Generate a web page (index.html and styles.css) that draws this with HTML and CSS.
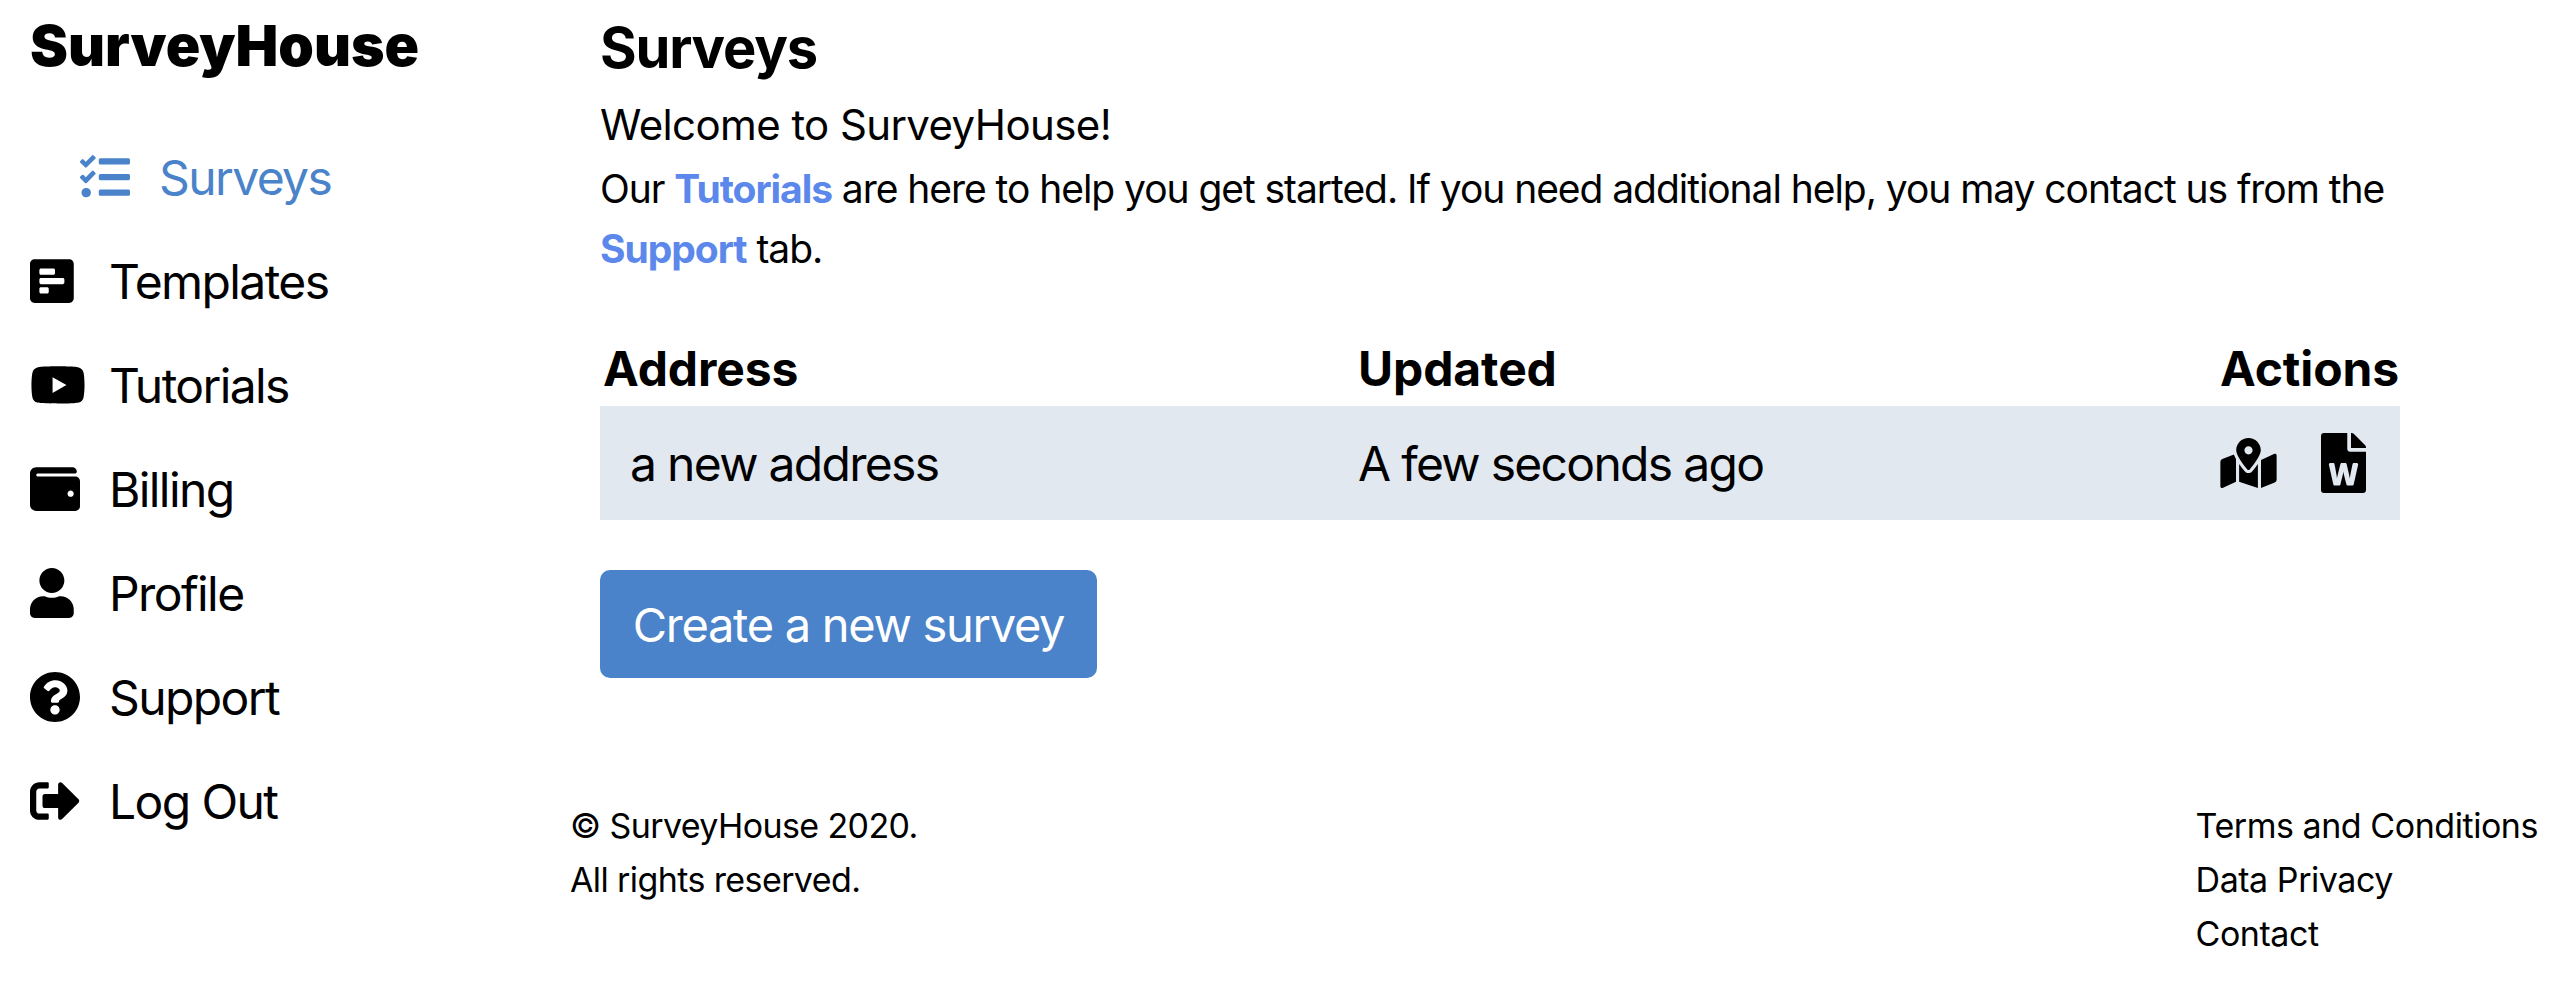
FILE: index.html
```html
<!DOCTYPE html>
<html lang="en">
<head>
<meta charset="utf-8">
<title>SurveyHouse</title>
<link rel="stylesheet" href="styles.css">
</head>
<body>
<div class="app">
  <aside class="sidebar">
    <div class="logo">SurveyHouse</div>
    <nav class="nav">
      <a class="nav-item active"><span class="nav-icon"><svg class="icon" viewBox="0 0 512 512"><path d="M139.61 35.5a12 12 0 0 0-17 0L58.93 98.81l-22.7-22.12a12 12 0 0 0-17 0L3.53 92.41a12 12 0 0 0 0 17l47.59 47.4a12.78 12.78 0 0 0 17.61 0l15.59-15.62L156.52 69a12.09 12.09 0 0 0 .09-17zm0 159.19a12 12 0 0 0-17 0l-63.68 63.72-22.7-22.1a12 12 0 0 0-17 0L3.53 252a12 12 0 0 0 0 17L51 316.5a12.77 12.77 0 0 0 17.6 0l15.7-15.69 72.2-72.22a12 12 0 0 0 .09-16.9zM64 368c-26.49 0-48.59 21.5-48.59 48S37.53 464 64 464a48 48 0 0 0 0-96zm432 16H208a16 16 0 0 0-16 16v32a16 16 0 0 0 16 16h288a16 16 0 0 0 16-16v-32a16 16 0 0 0-16-16zm0-320H208a16 16 0 0 0-16 16v32a16 16 0 0 0 16 16h288a16 16 0 0 0 16-16V80a16 16 0 0 0-16-16zm0 160H208a16 16 0 0 0-16 16v32a16 16 0 0 0 16 16h288a16 16 0 0 0 16-16v-32a16 16 0 0 0-16-16z"/></svg></span>Surveys</a>
      <a class="nav-item"><span class="nav-icon"><svg class="icon" viewBox="0 0 512 512"><path d="M448 432V80c0-26.5-21.5-48-48-48H48C21.5 32 0 53.5 0 80v352c0 26.5 21.5 48 48 48h352c26.5 0 48-21.5 48-48zM112 192c-8.84 0-16-7.16-16-16v-32c0-8.84 7.16-16 16-16h128c8.84 0 16 7.16 16 16v32c0 8.84-7.16 16-16 16H112zm0 96c-8.84 0-16-7.16-16-16v-32c0-8.84 7.16-16 16-16h224c8.84 0 16 7.16 16 16v32c0 8.84-7.16 16-16 16H112zm0 96c-8.84 0-16-7.16-16-16v-32c0-8.84 7.16-16 16-16h64c8.84 0 16 7.16 16 16v32c0 8.84-7.16 16-16 16h-64z"/></svg></span>Templates</a>
      <a class="nav-item"><span class="nav-icon"><svg class="icon icon-wide" viewBox="0 0 576 512"><path d="M549.655 124.083c-6.281-23.65-24.787-42.276-48.284-48.597C458.781 64 288 64 288 64S117.22 64 74.629 75.486c-23.497 6.322-42.003 24.947-48.284 48.597-11.412 42.867-11.412 132.305-11.412 132.305s0 89.438 11.412 132.305c6.281 23.65 24.787 41.5 48.284 47.821C117.22 448 288 448 288 448s170.78 0 213.371-11.486c23.497-6.321 42.003-24.171 48.284-47.821 11.412-42.867 11.412-132.305 11.412-132.305s0-89.438-11.412-132.305zm-317.51 213.508V175.185l142.739 81.205-142.739 81.201z"/></svg></span>Tutorials</a>
      <a class="nav-item"><span class="nav-icon"><svg class="icon" viewBox="0 0 512 512"><path d="M461.2 128H80c-8.84 0-16-7.16-16-16s7.16-16 16-16h384c8.84 0 16-7.16 16-16 0-26.51-21.49-48-48-48H64C28.65 32 0 60.65 0 96v320c0 35.35 28.65 64 64 64h397.2c28.02 0 50.8-21.53 50.8-48V176c0-26.47-22.78-48-50.8-48zM416 336c-17.67 0-32-14.33-32-32s14.33-32 32-32 32 14.33 32 32-14.33 32-32 32z"/></svg></span>Billing</a>
      <a class="nav-item"><span class="nav-icon"><svg class="icon" viewBox="0 0 512 512"><path d="M224 256c70.7 0 128-57.3 128-128S294.7 0 224 0 96 57.3 96 128s57.3 128 128 128zm89.6 32h-16.7c-22.2 10.2-46.9 16-72.9 16s-50.6-5.8-72.9-16h-16.7C60.2 288 0 348.2 0 422.4V464c0 26.5 21.5 48 48 48h352c26.5 0 48-21.5 48-48v-41.6c0-74.2-60.2-134.4-134.4-134.4z"/></svg></span>Profile</a>
      <a class="nav-item"><span class="nav-icon"><svg class="icon" viewBox="8 8 496 496"><path d="M504 256c0 136.997-111.043 248-248 248S8 392.997 8 256C8 119.083 119.043 8 256 8s248 111.083 248 248zM262.655 90c-54.497 0-89.255 22.957-116.549 63.758-3.536 5.286-2.353 12.415 2.715 16.258l34.699 26.31c5.205 3.947 12.621 3.008 16.665-2.122 17.864-22.658 30.113-35.797 57.303-35.797 20.429 0 45.698 13.148 45.698 32.958 0 14.976-12.363 22.667-32.534 33.976C247.128 238.528 216 254.941 216 296v4c0 6.627 5.373 12 12 12h56c6.627 0 12-5.373 12-12v-1.333c0-28.462 83.186-29.647 83.186-106.667 0-58.002-60.165-102-116.531-102zM256 338c-25.365 0-46 20.635-46 46 0 25.364 20.635 46 46 46s46-20.636 46-46c0-25.365-20.635-46-46-46z"/></svg></span>Support</a>
      <a class="nav-item"><span class="nav-icon"><svg class="icon" viewBox="0 0 512 512"><path d="M497 273L329 441c-15 15-41 4.5-41-17v-96H152c-13.3 0-24-10.7-24-24v-96c0-13.3 10.7-24 24-24h136V88c0-21.4 25.9-32 41-17l168 168c9.3 9.4 9.3 24.6 0 34zM192 436v-40c0-6.6-5.4-12-12-12H96c-17.7 0-32-14.3-32-32V160c0-17.7 14.3-32 32-32h84c6.6 0 12-5.4 12-12V76c0-6.6-5.4-12-12-12H96c-53 0-96 43-96 96v192c0 53 43 96 96 96h84c6.6 0 12-5.4 12-12z"/></svg></span>Log Out</a>
    </nav>
  </aside>
  <div class="content">
    <main class="main">
      <h1 class="title">Surveys</h1>
      <p class="welcome">Welcome to SurveyHouse!</p>
      <p class="intro">Our <a class="text-link">Tutorials</a> are here to help you get started. If you need additional help, you may contact us from the <a class="text-link">Support</a> tab.</p>
      <table class="surveys">
        <thead>
          <tr><th class="col-address">Address</th><th class="col-updated">Updated</th><th class="col-actions">Actions</th></tr>
        </thead>
        <tbody>
          <tr>
            <td class="cell-address">a new address</td>
            <td>A few seconds ago</td>
            <td><div class="actions">
              <svg class="act-map" viewBox="0 0 576 512"><path d="M288 0c-69.59 0-126 56.41-126 126 0 56.26 82.35 158.8 113.9 196.02 6.39 7.54 17.82 7.54 24.2 0C331.65 284.8 414 182.26 414 126 414 56.41 357.59 0 288 0zm0 168c-23.2 0-42-18.8-42-42s18.8-42 42-42 42 18.8 42 42-18.8 42-42 42zM20.12 215.95A32.006 32.006 0 0 0 0 245.66v250.32c0 11.32 11.43 19.06 21.94 14.86L160 448V214.92c-8.84-15.98-16.07-31.54-21.25-46.42L20.12 215.95zM288 359.67c-14.07 0-27.38-6.18-36.51-16.96-19.66-23.2-40.57-49.62-59.49-76.72V448l192 64V266c-18.92 27.09-39.82 53.52-59.49 76.72-9.13 10.77-22.44 16.95-36.51 16.95zm266.06-198.51L416 224v288l139.88-55.95A31.996 31.996 0 0 0 576 426.34V176.02c0-11.32-11.43-19.06-21.94-14.86z"/></svg>
              <svg class="act-file" viewBox="0 0 384 512"><path d="M224 136V0H24C10.7 0 0 10.7 0 24v464c0 13.3 10.7 24 24 24h336c13.3 0 24-10.7 24-24V160H248c-13.2 0-24-10.8-24-24zm57.1 120H305c7.7 0 13.4 7.1 11.7 14.7l-38 168c-1.2 5.5-6.1 9.3-11.7 9.3h-38c-5.5 0-10.3-3.8-11.6-9.1-25.8-103.5-20.8-81.2-25.6-110.5h-.5c-1.1 14.3-2.4 17.4-25.6 110.5-1.3 5.3-6.1 9.1-11.6 9.1H117c-5.6 0-10.5-3.9-11.7-9.4l-37.8-168c-1.7-7.5 4-14.6 11.7-14.6h24.5c5.7 0 10.7 4 11.8 9.7 15.6 78 20.1 109.5 21 122.2 1.6-10.2 7.3-32.7 29.4-122.7 1.3-5.4 6.1-9.1 11.7-9.1h29.1c5.6 0 10.4 3.8 11.7 9.2 24 100.4 28.8 124 29.6 129.4-.2-11.2-2.6-17.8 21.6-129.2 1-5.6 5-9.5 10.5-9.5zM384 121.9v6.1H256V0h6.1c6.4 0 12.5 2.5 17 7l97.9 98c4.5 4.5 7 10.6 7 16.9z"/></svg>
            </div></td>
          </tr>
        </tbody>
      </table>
      <button class="btn">Create a new survey</button>
    </main>
    <footer class="footer">
      <div class="foot-col">© SurveyHouse 2020.<br>All rights reserved.</div>
      <div class="foot-col foot-links"><a>Terms and Conditions</a><br><a>Data Privacy</a><br><a>Contact</a></div>
    </footer>
  </div>
</div>
</body>
</html>
```
FILE: styles.css
```css
* { box-sizing: border-box; }
html, body { margin: 0; padding: 0; background: #fff; color: #000; }
body { font-family: Inter, "Liberation Sans", sans-serif; }
.app { display: flex; align-items: flex-start; }
.sidebar { width: 570px; flex: none; padding: 14px 0 0 30px; }
.logo { font-size: 57px; font-weight: 900; line-height: 64px; white-space: nowrap; }
.nav { display: flex; flex-direction: column; margin-top: 47px; }
.nav-item { display: flex; align-items: center; height: 104px; font-size: 48px; letter-spacing: -1.6px; color: #000; }
.nav-item.active { color: #4a83c9; padding-left: 50px; }
.nav-icon { width: 79px; flex: none; display: flex; align-items: center; }
.icon { width: 50px; height: 50px; fill: currentColor; display: block; }
.icon-wide { width: 56px; }
.content { flex: 1; min-width: 0; }
.main { padding: 16px 160px 0 30px; }
.title { margin: 0 0 14px; font-size: 56px; font-weight: 700; letter-spacing: -1.2px; line-height: 64px; }
.welcome { margin: 0 0 4px; font-size: 42px; letter-spacing: -0.6px; line-height: 61px; }
.intro { margin: 0; font-size: 39px; letter-spacing: -1.05px; line-height: 60px; width: 1800px; }
.text-link { color: #5c88eb; font-weight: 700; }
.surveys { width: 1800px; border-collapse: collapse; table-layout: fixed; margin-top: 51px; }
.surveys th { font-size: 48px; font-weight: 700; letter-spacing: -0.1px; text-align: left; height: 76px; padding: 0; }
.surveys td { font-size: 48px; letter-spacing: -1.7px; height: 114px; padding: 0; background: #e2e8f0; }
.col-address { width: 758px; padding-left: 3px !important; }
.col-updated { width: 862px; }
.cell-address { padding-left: 30px !important; }
.actions { display: flex; align-items: center; gap: 44px; }
.act-map { width: 57px; height: 50px; fill: #000; }
.act-file { width: 45px; height: 60px; fill: #000; }
.btn { display: block; margin-top: 50px; width: 497px; height: 108px; border: 0; border-radius: 10px; background: #4a83c9; color: #fff; font-family: inherit; font-size: 47px; letter-spacing: -1.3px; padding: 0; }
.footer { display: flex; justify-content: space-between; padding: 121px 22px 0 0; font-size: 34px; letter-spacing: -0.6px; line-height: 54px; }
.foot-links { letter-spacing: -0.45px; }
```
